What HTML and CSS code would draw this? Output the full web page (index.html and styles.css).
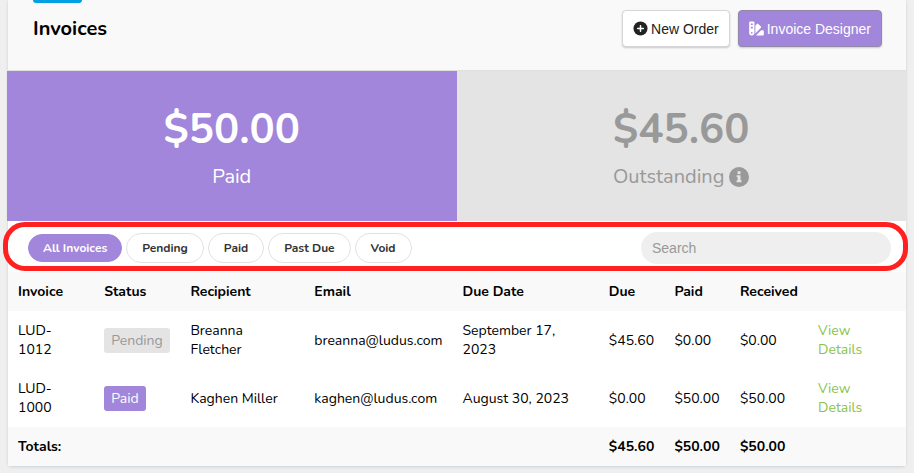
FILE: index.html
```html
<!DOCTYPE html>
<html lang="en">
<head>
  <meta charset="UTF-8" />
  <meta name="viewport" content="width=device-width, initial-scale=1.0" />
  <title>Invoices</title>
  <link rel="stylesheet" href="styles.css">
</head>
<body>
  <main class="card">
    <header class="card-header">
      <div class="heading">
        <div class="accent"></div>
        <h1>Invoices</h1>
      </div>
      <div class="actions">
        <button class="btn" type="button">
          <svg class="btn-icon" viewBox="0 0 16 16" aria-hidden="true">
            <circle cx="8" cy="8" r="7.5" fill="currentColor" />
            <path d="M8 5v6M5 8h6" stroke="#fff" stroke-width="1.6" stroke-linecap="round" />
          </svg>
          New Order
        </button>
        <button class="btn btn-primary" type="button">
          <svg class="btn-icon" viewBox="0 0 16 16" aria-hidden="true">
            <path fill="currentColor" fill-rule="evenodd" d="M1.200 .5h3.600a1 1 0 0 1 1 1v11.100a2.800 2.800 0 0 1-5.600 0V1.500a1 1 0 0 1 1-1zM2 2.600v1.700h2V2.600zM2 6.200v1.700h2V6.200zM3 11.700a.9.9 0 1 0 0 1.800.9.9 0 0 0 0-1.800z" />
            <path fill="currentColor" d="M6.800 4.800l1.700-1.700a1 1 0 0 1 1.400 0l2.800 2.800a1 1 0 0 1 0 1.400L6.800 13.200zM13 9.800h1.800a1 1 0 0 1 1 1v3.600a1 1 0 0 1-1 1H7.400z" />
          </svg>
          Invoice Designer
        </button>
      </div>
    </header>

    <section class="stats">
      <div class="stat stat-paid">
        <div class="stat-amount">$50.00</div>
        <div class="stat-label">Paid</div>
      </div>
      <div class="stat stat-outstanding">
        <div class="stat-amount">$45.60</div>
        <div class="stat-label">
          Outstanding
          <svg class="info-icon" viewBox="0 0 20 20" aria-hidden="true">
            <circle cx="10" cy="10" r="10" fill="currentColor" />
            <path fill="#e4e4e4" d="M8.6 4.200h2.900v2.700H8.600zM7.700 8.200h3.800v5h1v2H7.600v-2h1.100v-3h-1z" />
          </svg>
        </div>
      </div>
    </section>

    <section class="filters">
      <div class="pills">
        <button class="pill active" type="button">All Invoices</button>
        <button class="pill" type="button">Pending</button>
        <button class="pill" type="button">Paid</button>
        <button class="pill" type="button">Past Due</button>
        <button class="pill" type="button">Void</button>
      </div>
      <input class="search" type="search" placeholder="Search" aria-label="Search">
    </section>

    <table class="invoices">
      <colgroup>
        <col class="col-invoice">
        <col class="col-status">
        <col class="col-recipient">
        <col class="col-email">
        <col class="col-date">
        <col class="col-due">
        <col class="col-paid">
        <col class="col-received">
        <col>
      </colgroup>
      <thead>
        <tr>
          <th>Invoice</th>
          <th>Status</th>
          <th>Recipient</th>
          <th>Email</th>
          <th>Due Date</th>
          <th>Due</th>
          <th>Paid</th>
          <th>Received</th>
          <th></th>
        </tr>
      </thead>
      <tbody>
        <tr>
          <td class="wrap">LUD-1012</td>
          <td><span class="badge">Pending</span></td>
          <td class="wrap">Breanna Fletcher</td>
          <td>breanna@ludus.com</td>
          <td class="wrap">September 17, 2023</td>
          <td>$45.60</td>
          <td>$0.00</td>
          <td>$0.00</td>
          <td class="wrap"><a href="#">View Details</a></td>
        </tr>
        <tr>
          <td class="wrap">LUD-1000</td>
          <td><span class="badge badge-paid">Paid</span></td>
          <td>Kaghen Miller</td>
          <td>kaghen@ludus.com</td>
          <td>August 30, 2023</td>
          <td>$0.00</td>
          <td>$50.00</td>
          <td>$50.00</td>
          <td class="wrap"><a href="#">View Details</a></td>
        </tr>
      </tbody>
      <tfoot>
        <tr>
          <th colspan="5">Totals:</th>
          <th>$45.60</th>
          <th>$50.00</th>
          <th>$50.00</th>
          <th></th>
        </tr>
      </tfoot>
    </table>
  </main>
</body>
</html>
```

FILE: styles.css
```css
:root {
  --purple: #a186db;
  --gray: #e4e4e4;
  --gray-text: #999;
  --stripe: #f9f9f9;
  --green: #8bc34a;
  --red: #ff2020;
}

* {
  box-sizing: border-box;
}

body {
  margin: 0;
  padding: 0 8px 7px;
  background: #efefef;
  color: #000;
  font-family: Nunito, "Open Sans", sans-serif;
  font-size: 14px;
  line-height: 19px;
}

.card {
  background: #fff;
  border-radius: 0 0 4px 4px;
  box-shadow: 0 1px 3px rgba(60, 80, 110, 0.2);
}

.card-header {
  display: flex;
  justify-content: space-between;
  align-items: flex-start;
  height: 71px;
  padding: 0 24px 0 25px;
  background: var(--stripe);
  border-bottom: 1px solid #e0e0e0;
}

.accent {
  width: 49px;
  height: 3px;
  background: #00a1e4;
  border-radius: 0 0 3px 3px;
}

h1 {
  margin: 13px 0 0;
  font-size: 20px;
  line-height: 26px;
  font-weight: 700;
}

.actions {
  display: flex;
  gap: 8px;
  padding-top: 10px;
}

.btn {
  display: flex;
  align-items: center;
  gap: 3px;
  height: 37px;
  padding: 0 10px;
  background: #fff;
  color: #222;
  border: 1px solid #d6d6d6;
  border-radius: 4px;
  box-shadow: 0 1px 2px rgba(0, 0, 0, 0.2);
  font-family: "Liberation Sans", Arial, sans-serif;
  font-size: 14px;
  cursor: pointer;
}

.btn-primary {
  background: var(--purple);
  border-color: #9288a8;
  color: #fff;
}

.btn-icon {
  width: 15px;
  height: 15px;
}

.stats {
  display: grid;
  grid-template-columns: 1fr 1fr;
  margin-left: -1px;
}

.stat {
  height: 150px;
  padding-top: 34px;
  text-align: center;
}

.stat-paid {
  background: var(--purple);
  color: #fff;
}

.stat-outstanding {
  background: var(--gray);
  color: var(--gray-text);
}

.stat-amount {
  font-size: 42px;
  line-height: 50px;
  font-weight: 700;
}

.stat-label {
  display: flex;
  justify-content: center;
  align-items: center;
  gap: 5px;
  margin-top: 9px;
  font-size: 20px;
  line-height: 26px;
}

.info-icon {
  width: 20px;
  height: 20px;
}

.filters {
  position: relative;
  display: flex;
  justify-content: space-between;
  align-items: center;
  height: 51px;
  padding: 2px 15px 0 20px;
}

/* highlight ring drawn over the card edges */
.filters::after {
  content: "";
  position: absolute;
  inset: 1px -2px 1px -5px;
  border: 5px solid var(--red);
  border-radius: 22px;
  pointer-events: none;
}

.pills {
  display: flex;
  align-items: center;
  gap: 4px;
}

.pill {
  height: 30px;
  padding: 0 15px;
  background: #fff;
  color: #333;
  border: 1px solid #e2e2e2;
  border-radius: 15px;
  font-family: inherit;
  font-size: 12px;
  font-weight: 700;
  cursor: pointer;
}

.pill.active {
  height: 28px;
  padding: 0 14px;
  background: var(--purple);
  border-color: var(--purple);
  color: #fff;
}

.search {
  width: 250px;
  height: 32px;
  padding: 0 11px;
  background: #efefef;
  border: 0;
  border-radius: 16px;
  font-family: "Liberation Sans", Arial, sans-serif;
  font-size: 14px;
}

.search::placeholder {
  color: var(--gray-text);
}

.invoices {
  width: 100%;
  table-layout: fixed;
  border-collapse: collapse;
}

.col-invoice, .col-status {
  width: 9.6%;
}

.col-recipient {
  width: 13.8%;
}

.col-email {
  width: 16.5%;
}

.col-date {
  width: 16.3%;
}

.col-due, .col-paid {
  width: 7.3%;
}

.col-received {
  width: 8.7%;
}

th, td {
  padding: 10px 0 10px 10px;
  text-align: left;
  vertical-align: middle;
}

th {
  font-weight: 700;
}

thead, tfoot {
  background: var(--stripe);
}

td.wrap {
  padding-right: 30px;
}

.badge {
  display: inline-block;
  padding: 3px 7px;
  background: var(--gray);
  color: var(--gray-text);
  border-radius: 3px;
}

.badge-paid {
  background: var(--purple);
  color: #fff;
}

a {
  color: var(--green);
  text-decoration: none;
}
```
